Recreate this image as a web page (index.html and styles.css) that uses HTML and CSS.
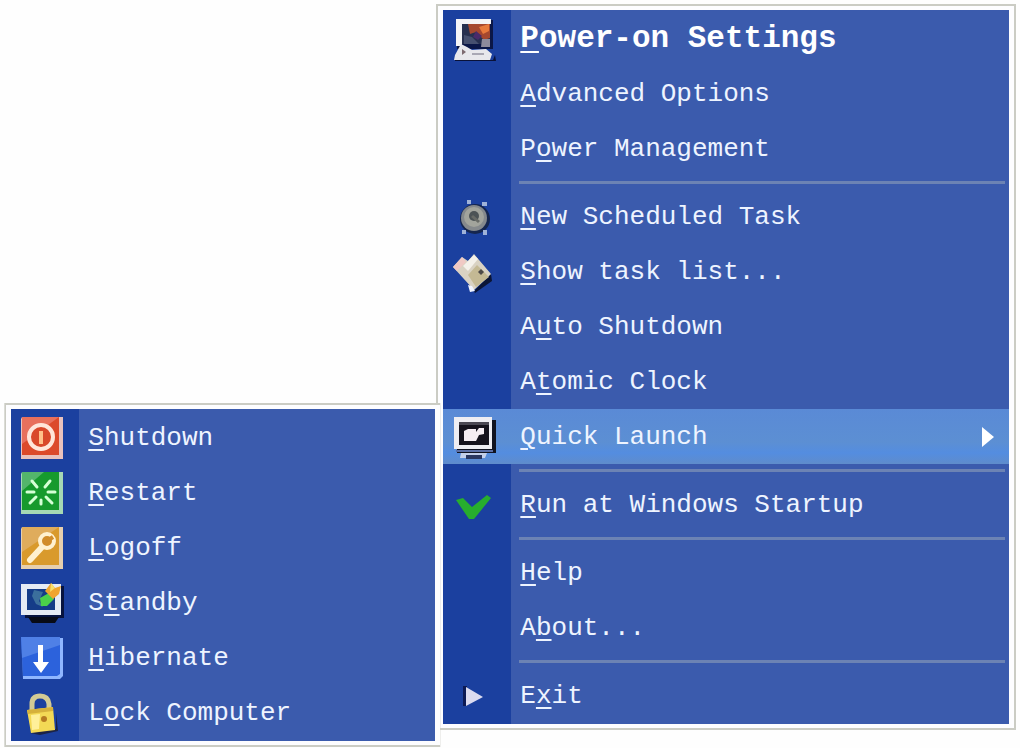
FILE: index.html
```html
<!DOCTYPE html>
<html lang="en">
  <head>
    <meta charset="UTF-8" />
    <meta name="viewport" content="width=device-width, initial-scale=1.0" />
    <title>Tray Menu</title>
    <link rel="stylesheet" href="styles.css">
  </head>
  <body>
    <ul class="menu main-menu">
      <li>
        <button type="button" class="item default">
          <span class="icon">
            <svg viewBox="0 0 44 44">
              <path d="M5 3h36v29H5z" fill="#0b1747" />
              <path d="M4 2h35v5H10v22H4z" fill="#f4f4f6" />
              <path d="M10 7h28v20H10z" fill="#27304f" />
              <path d="M16 7h22v14l-6 2-8-8-6 2z" fill="#a5482f" />
              <path d="M27 10l10-3v7l-6 3z" fill="#e87a3c" />
              <path d="M24 14l6 5-4 4-5-3z" fill="#4a2a6a" />
              <path d="M12 18l8 2 7 7H12z" fill="#46506f" />
              <path d="M30 22h8v8h-9z" fill="#8d8b9c" />
              <path d="M3 38l6-11 6 3 5 3 14-1 6 5-2 6H2z" fill="#e8e8ec" />
              <path d="M10 32l4 3-4 3z" fill="#7d6b70" />
              <path d="M20 36h12v2H20z" fill="#a9a8b4" />
              <path d="M3 43h38l2-5 1 6H3z" fill="#0a1238" />
            </svg>
          </span>
          <span class="label"><u>P</u>ower-on Settings</span>
        </button>
      </li>
      <li>
        <button type="button" class="item">
          <span class="icon"></span>
          <span class="label"><u>A</u>dvanced Options</span>
        </button>
      </li>
      <li>
        <button type="button" class="item">
          <span class="icon"></span>
          <span class="label">P<u>o</u>wer Management</span>
        </button>
      </li>
      <li class="separator"></li>
      <li>
        <button type="button" class="item">
          <span class="icon">
            <svg viewBox="0 0 44 44">
              <circle cx="23" cy="24" r="15" fill="#15264f" />
              <circle cx="22" cy="23" r="13" fill="#85898c" />
              <circle cx="22" cy="22" r="10" fill="#a2a49c" />
              <circle cx="22" cy="21" r="5" fill="#4c5355" />
              <path d="M21 20l7 6-2 2-7-6z" fill="#686b66" />
              <path d="M15 5h4v4h-4zM30 7h5v4h-5zM31 35h4v5h-4zM10 35h4v4h-4z" fill="#9fb2d8" />
            </svg>
          </span>
          <span class="label"><u>N</u>ew Scheduled Task</span>
        </button>
      </li>
      <li>
        <button type="button" class="item">
          <span class="icon">
            <svg viewBox="0 0 44 44">
              <path d="M22 41l17-17 1 7-17 12z" fill="#0b1536" />
              <path d="M1 17l9-10 6 4 6-7 17 20-17 16z" fill="#d9d2c3" />
              <path d="M1 17l9-10 4 5-9 9z" fill="#f0c9c4" />
              <path d="M11 16l11-11 4 4-10 12z" fill="#f4f1ea" />
              <path d="M16 25l9-10 12 12-13 10z" fill="#c4b994" />
              <path d="M29 19l3 3-3 3-3-3z" fill="#4d4a48" />
              <path d="M16 35l4 1 3 5-5 1z" fill="#f1f4ff" />
            </svg>
          </span>
          <span class="label"><u>S</u>how task list...</span>
        </button>
      </li>
      <li>
        <button type="button" class="item">
          <span class="icon"></span>
          <span class="label">A<u>u</u>to Shutdown</span>
        </button>
      </li>
      <li>
        <button type="button" class="item">
          <span class="icon"></span>
          <span class="label">A<u>t</u>omic Clock</span>
        </button>
      </li>
      <li class="has-submenu">
        <button type="button" class="item active" aria-haspopup="true" aria-expanded="true">
          <span class="icon">
            <svg viewBox="0 0 44 44">
              <path d="M5 5h39v33H5z" fill="#10131f" />
              <path d="M2 2h38v32H2z" fill="#eeeef2" />
              <path d="M7 7h30v23H7z" fill="#15131c" />
              <path d="M7 7h30v3H7z" fill="#4a4852" />
              <path d="M12 16l4-2h8v3l3-4h5v6l-5 1-3 6H12z" fill="#f5eef2" />
              <path d="M4 35h37v2H4z" fill="#5b6fa6" />
              <path d="M9 38h26l-2 5H8z" fill="#c4d0ea" />
              <path d="M14 40h16v4H14z" fill="#2a3760" />
            </svg>
          </span>
          <span class="label"><u>Q</u>uick Launch</span>
          <svg class="arrow" viewBox="0 0 14 22"><path d="M1 1l12 10L1 21z" fill="#fff" /></svg>
        </button>
        <ul class="menu submenu">
          <li>
            <button type="button" class="item">
              <span class="icon">
                <svg viewBox="0 0 44 44">
                  <path d="M2 1h41v42H1V3z" fill="#e9c2bd" />
                  <path d="M2 1h37v38H2z" fill="#dc4a2b" />
                  <path d="M2 1h37L2 28z" fill="#e8705c" />
                  <circle cx="21" cy="21" r="12" fill="#d9482a" stroke="#ffe6da" stroke-width="4" />
                  <path d="M19 15h4v13h-4z" fill="#ffc08a" />
                </svg>
              </span>
              <span class="label"><u>S</u>hutdown</span>
            </button>
          </li>
          <li>
            <button type="button" class="item">
              <span class="icon">
                <svg viewBox="0 0 44 44">
                  <path d="M2 1h41v42H1V3z" fill="#a5d8b4" />
                  <path d="M2 1h37v38H2z" fill="#169a2d" />
                  <path d="M2 1h22L2 20z" fill="#53b56b" />
                  <g stroke="#d5ffd5" stroke-width="3" stroke-linecap="round">
                    <path d="M7 21h7M28 21h7M12 10l5 6M30 10l-5 6M10 32l6-6M32 32l-6-6M21 29v4" />
                  </g>
                </svg>
              </span>
              <span class="label"><u>R</u>estart</span>
            </button>
          </li>
          <li>
            <button type="button" class="item">
              <span class="icon">
                <svg viewBox="0 0 44 44">
                  <path d="M2 1h41v42H1V3z" fill="#e6cfae" />
                  <path d="M2 1h37v38H2z" fill="#d99a2c" />
                  <path d="M2 1h37L2 26z" fill="#dfac5c" />
                  <path d="M22 21L10 34" stroke="#fff1cf" stroke-width="6" stroke-linecap="round" />
                  <circle cx="27" cy="15" r="7" fill="#d18c2a" stroke="#fff1cf" stroke-width="4" />
                  <path d="M27 15l6-4" stroke="#d18c2a" stroke-width="4" />
                </svg>
              </span>
              <span class="label"><u>L</u>ogoff</span>
            </button>
          </li>
          <li>
            <button type="button" class="item">
              <span class="icon">
                <svg viewBox="0 0 44 44">
                  <path d="M5 5h39v32H5z" fill="#07133f" />
                  <path d="M8 36h31l-4 6H12z" fill="#080b16" />
                  <path d="M1 3h40v31H1z" fill="#e6ebf4" />
                  <path d="M7 8h28v21H7z" fill="#153c88" />
                  <path d="M14 9l9 2-4 9 4 6-7-3-4-8z" fill="#3b6f9c" />
                  <path d="M20 17l9-5 5 6-7 7h-6z" fill="#4bd04a" />
                  <path d="M25 10l6-8 4 5 6-2-2 8-6 5z" fill="#efa52f" />
                  <path d="M31 2l4 5-5 4z" fill="#f7df6a" />
                </svg>
              </span>
              <span class="label">S<u>t</u>andby</span>
            </button>
          </li>
          <li>
            <button type="button" class="item">
              <span class="icon">
                <svg viewBox="0 0 44 44">
                  <path d="M2 2h41v38l-3 3H3z" fill="#8fb6ff" />
                  <path d="M1 1h39v37l-3 2H3z" fill="#2c62dc" />
                  <path d="M1 1h39v8L2 22z" fill="#4f80e6" />
                  <path d="M18 9h5v17h6l-8 11-8-11h5z" fill="#fff" />
                </svg>
              </span>
              <span class="label"><u>H</u>ibernate</span>
            </button>
          </li>
          <li>
            <button type="button" class="item">
              <span class="icon">
                <svg viewBox="0 0 44 44">
                  <path d="M12 20v-7q0-8 8-8t9 8v7" fill="none" stroke="#d3cb95" stroke-width="5" />
                  <path d="M10 42l26-4v-16l2 18-18 4z" fill="#1b2346" />
                  <path d="M7 19l26-3 2 23-24 3z" fill="#f3d955" />
                  <path d="M7 19l26-3v4L8 23z" fill="#d6b13c" />
                  <path d="M11 24l9-1-1 15-7 1z" fill="#fff09a" />
                  <circle cx="24" cy="28" r="3" fill="#b57a22" />
                </svg>
              </span>
              <span class="label">L<u>o</u>ck Computer</span>
            </button>
          </li>
        </ul>
      </li>
      <li class="separator"></li>
      <li>
        <button type="button" class="item">
          <span class="icon">
            <svg viewBox="0 0 44 44">
              <path d="M4 17l7-2 9 9L35 12l4 3-17 21h-5z" fill="#27ae2e" />
            </svg>
          </span>
          <span class="label"><u>R</u>un at Windows Startup</span>
        </button>
      </li>
      <li class="separator"></li>
      <li>
        <button type="button" class="item">
          <span class="icon"></span>
          <span class="label"><u>H</u>elp</span>
        </button>
      </li>
      <li>
        <button type="button" class="item">
          <span class="icon"></span>
          <span class="label">A<u>b</u>out...</span>
        </button>
      </li>
      <li class="separator"></li>
      <li>
        <button type="button" class="item">
          <span class="icon">
            <svg viewBox="0 0 44 44">
              <path d="M11 12h4v20h-4z" fill="#0c1a55" />
              <path d="M14 13l17 10-17 9z" fill="#dcdcf0" />
            </svg>
          </span>
          <span class="label">E<u>x</u>it</span>
        </button>
      </li>
    </ul>
  </body>
</html>
```

FILE: styles.css
```css
* {
  box-sizing: border-box;
}
body {
  display: flex;
  align-items: flex-start;
  min-height: 100vh;
  margin: 0;
  padding: 6px 6px 0 4px;
  background-color: #fefefe;
}
ul {
  list-style: none;
  margin: 0;
}
.menu {
  padding: 1px 0;
  border: 4px solid #fdfdff;
  border-width: 4px 5px;
  outline: 2px solid #cbccc4;
  background: linear-gradient(to right, #1b409f 68px, #3b5bad 68px);
}
.main-menu {
  width: 57%;
  margin-left: auto;
}
.has-submenu {
  position: relative;
}
.submenu {
  position: absolute;
  top: -4px;
  right: 100%;
  width: 434px;
  margin-right: 3px;
  /* no outline on the side that touches the main menu */
  clip-path: inset(-2px 0 -2px -2px);
}
.item {
  display: flex;
  align-items: center;
  width: 100%;
  height: 55px;
  padding: 0 14px 0 9px;
  border: none;
  background: none;
  color: #eef4ff;
  font-family: "Liberation Mono", "Courier New", monospace;
  font-size: 26px;
  line-height: 32px;
  text-align: left;
}
.item u {
  text-decoration-thickness: 2px;
  text-underline-offset: 4px;
}
.default {
  font-size: 31px;
  font-weight: bold;
  color: #fff;
}
.active {
  background: linear-gradient(#5a8ad6, #5c8fd3 60%, #548de0 80%, #5f8ccb);
}
.icon {
  flex: none;
  width: 44px;
  height: 44px;
  margin-right: 24px;
}
.icon svg {
  display: block;
}
.label {
  flex: 1;
  white-space: nowrap;
}
.arrow {
  width: 14px;
  height: 22px;
}
.separator {
  height: 13px;
  padding: 5px 4px 0 76px;
}
.separator::before {
  content: "";
  display: block;
  height: 3px;
  background-color: #6c83b4;
}
```
